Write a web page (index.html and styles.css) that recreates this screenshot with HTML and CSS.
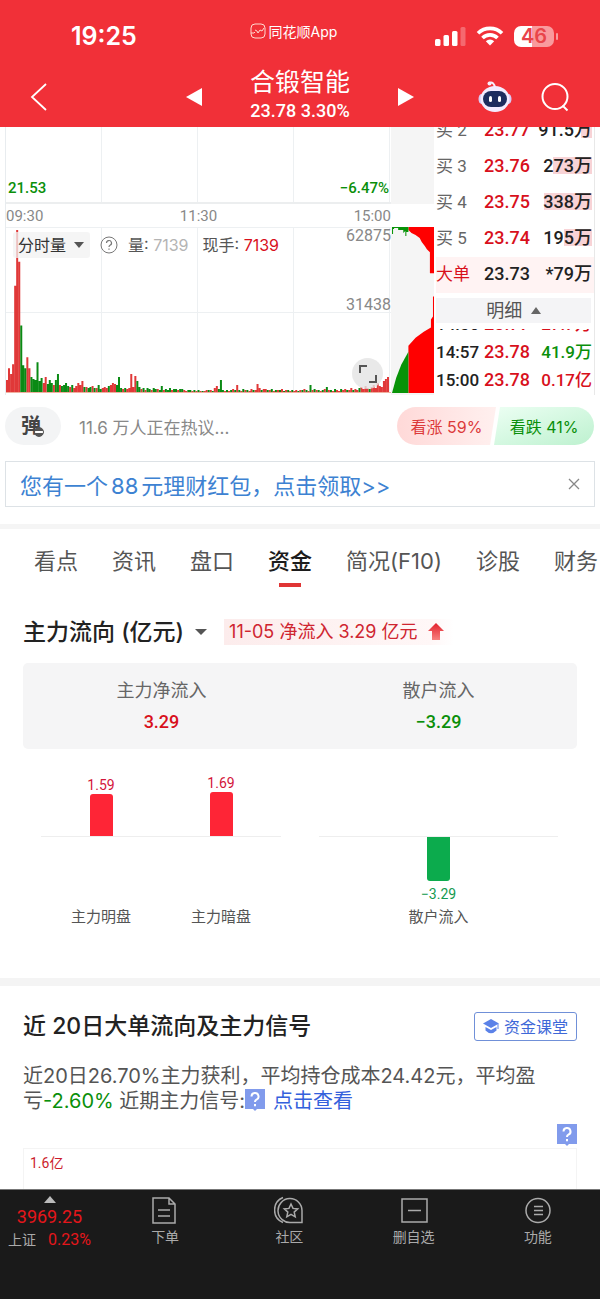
FILE: index.html
```html
<!DOCTYPE html>
<html lang="zh-CN">
<head>
<meta charset="utf-8">
<meta name="viewport" content="width=device-width, initial-scale=1">
<title>合锻智能</title>
<link rel="stylesheet" href="styles.css">
</head>
<body>
<header class="top">
  <div class="status">
    <time class="clock">19:25</time>
    <div class="app-name">
      <svg width="16" height="16" viewBox="0 0 16 16" fill="none" stroke="#ffd9d0" stroke-width="1"><rect x="1" y="1" width="14" height="14" rx="4"/><path d="M1 10h3l1-1M5 7l2 1 1 2 2-3 2 1 2-3"/></svg>
      <span>同花顺App</span>
    </div>
    <div class="signals">
      <svg width="31" height="20" viewBox="0 0 31 20" fill="#fff"><rect x="0" y="13" width="5.500" height="7" rx="1.500"/><rect x="8.500" y="9" width="5.500" height="11" rx="1.500"/><rect x="17" y="5" width="5.500" height="15" rx="1.500"/><rect x="25.500" y="1" width="5" height="19" rx="1.500" opacity=".28"/></svg>
      <svg width="28" height="20" viewBox="0 0 28 20" fill="none" stroke="#fff" stroke-width="3.600"><path d="M2 7.300a17 17 0 0 1 24 0"/><path d="M6.500 12a10.500 10.500 0 0 1 15 0"/><path d="M14 19.500l-4.200-4.300a6 6 0 0 1 8.400 0z" fill="#fff" stroke="none"/></svg>
      <div class="battery"><span>46</span></div>
    </div>
  </div>
  <div class="title-row">
    <button class="icon-btn back" aria-label="返回"><svg width="18" height="30" viewBox="0 0 18 30" fill="none" stroke="#fff" stroke-width="1.800"><path d="M16 2L2 15l14 13"/></svg></button>
    <div class="stock">
      <button class="icon-btn" aria-label="上一只"><svg width="16" height="18" viewBox="0 0 16 18" fill="#fff"><path d="M0 9L16 0v18z"/></svg></button>
      <div class="stock-name"><h1>合锻智能</h1><p>23.78 3.30%</p></div>
      <button class="icon-btn" aria-label="下一只"><svg width="16" height="18" viewBox="0 0 16 18" fill="#fff"><path d="M16 9L0 0v18z"/></svg></button>
    </div>
    <div class="tools">
      <button class="icon-btn" aria-label="智能助手"><svg width="34" height="32" viewBox="0 0 34 32"><path d="M11 2q5-2 6 5" fill="none" stroke="#f6eefb" stroke-width="2"/><circle cx="11.500" cy="2.500" r="2" fill="#f6eefb"/><ellipse cx="3.500" cy="18" rx="3" ry="5" fill="#d9cbf5"/><ellipse cx="30.500" cy="18" rx="3" ry="5" fill="#d9cbf5"/><ellipse cx="17" cy="18" rx="14.500" ry="13" fill="#f3ecff"/><rect x="5" y="10" width="24" height="16" rx="8" fill="#1d2c5e"/><rect x="11" y="15" width="3" height="6" rx="1.500" fill="#fff"/><rect x="20" y="15" width="3" height="6" rx="1.500" fill="#fff"/></svg></button>
      <button class="icon-btn" aria-label="搜索"><svg width="30" height="30" viewBox="0 0 30 30" fill="none" stroke="#fff" stroke-width="2"><circle cx="15" cy="14.500" r="12.500"/><path d="M22.500 23.500l5 5"/></svg></button>
    </div>
  </div>
</header>
<main>
  <section class="quote">
    <div class="chart">
      <div class="price-plot"><span>21.53</span><span>−6.47%</span></div>
      <div class="axis"><span>09:30</span><span>11:30</span><span>15:00</span></div>
      <div class="volume">
        <svg id="volume-bars" class="bars" viewBox="0 0 386 165" preserveAspectRatio="none"></svg>
        <div class="volume-head">
          <button class="indicator">分时量 <i class="caret"></i></button>
          <svg width="18" height="18" viewBox="0 0 18 18" fill="none" stroke="#777"><circle cx="9" cy="9" r="8"/><path d="M6.500 7a2.500 2.500 0 1 1 3.500 2.300q-1 .5-1 1.700M9 12.500v1.300" stroke-width="1.200"/></svg>
          <span>量: <b class="num-grey">7139</b></span>
          <span>现手: <b class="num-red">7139</b></span>
        </div>
        <span class="scale scale-top">62875</span>
        <span class="scale scale-mid">31438</span>
        <button class="expand" aria-label="全屏"><svg width="18" height="18" viewBox="0 0 18 18" fill="none" stroke="#555" stroke-width="2"><path d="M1 8V1h7M17 10v7h-7"/></svg></button>
      </div>
    </div>
    <div class="depth">
      <svg viewBox="0 0 42 165" preserveAspectRatio="none"><path d="M17 0H42V46H38V25L35 22 33 19 30 15 28 11 24 8 20 6 17 3z" fill="#f00"/><path d="M1 0H17V5H15V9H14V4L12 6V3H7V1H3V2H2V7H1z" fill="#089308"/><path d="M42 69V165H17V118L24 110 32 104 39 100V92l2-3V69z" fill="#f00"/><path d="M1 165L5 150 10 137 17 124V165z" fill="#089308"/></svg>
    </div>
    <div class="book">
      <div class="orders">
        <div class="order"><span>买 2</span><b>23.77</b><em><i style="width:11px"></i>91.5万</em></div>
        <div class="order"><span>买 3</span><b>23.76</b><em><i style="width:39px"></i>273万</em></div>
        <div class="order"><span>买 4</span><b>23.75</b><em><i style="width:48px"></i>338万</em></div>
        <div class="order"><span>买 5</span><b>23.74</b><em><i style="width:28px"></i>195万</em></div>
        <div class="order big"><span>大单</span><b>23.73</b><em>*79万</em></div>
      </div>
      <button class="detail">明细 <i class="caret up"></i></button>
      <div class="ticks">
        <div class="tick"><span>14:56</span><b>23.77</b><em class="red">27.7万</em></div>
        <div class="tick"><span>14:57</span><b>23.78</b><em class="green">41.9万</em></div>
        <div class="tick"><span>15:00</span><b>23.78</b><em class="red">0.17亿</em></div>
      </div>
    </div>
  </section>

  <section class="talk">
    <button class="danmu" aria-label="弹幕">弹<i></i></button>
    <p>11.6 万人正在热议...</p>
    <div class="vote"><button class="bull">看涨 59%</button><button class="bear">看跌 41%</button></div>
  </section>
  <div class="promo">
    <a href="#">您有一个<span>88</span>元理财红包，点击领取&gt;&gt;</a>
    <button class="icon-btn" aria-label="关闭"><svg width="12" height="12" viewBox="0 0 12 12" stroke="#888" stroke-width="1.300"><path d="M1 1l10 10M11 1L1 11"/></svg></button>
  </div>

  <nav class="tabs">
    <a href="#">看点</a><a href="#">资讯</a><a href="#">盘口</a><a href="#" class="on">资金</a><a href="#">简况(F10)</a><a href="#">诊股</a><a href="#">财务</a>
  </nav>

  <section class="flow">
    <div class="flow-head">
      <h2>主力流向 (亿元)</h2><i class="caret"></i>
      <span class="tag">11-05 净流入 3.29 亿元<svg width="16" height="18" viewBox="0 0 16 18"><defs><linearGradient id="up" x2="0" y2="1"><stop stop-color="#e3202c"/><stop offset="1" stop-color="#f7827f"/></linearGradient></defs><path d="M8 0l8 8h-4v9H4V8H0z" fill="url(#up)"/></svg></span>
    </div>
    <div class="summary">
      <div><span>主力净流入</span><b class="red">3.29</b></div>
      <div><span>散户流入</span><b class="green">−3.29</b></div>
    </div>
    <div class="bars-row">
      <div class="group main-force">
        <div class="col"><div class="pos"><b>1.59</b><i style="height:42px"></i></div><div class="neg"></div><span>主力明盘</span></div>
        <div class="col"><div class="pos"><b>1.69</b><i style="height:44px"></i></div><div class="neg"></div><span>主力暗盘</span></div>
      </div>
      <div class="group retail">
        <div class="col"><div class="pos"></div><div class="neg"><i style="height:44px"></i><b>−3.29</b></div><span>散户流入</span></div>
      </div>
    </div>
  </section>

  <section class="signal">
    <div class="signal-head">
      <h2>近 20日大单流向及主力信号</h2>
      <button class="course"><svg width="16" height="15" viewBox="0 0 16 15" fill="#5b82e8"><path d="M8 0l8 4.500L8 9 0 4.500z"/><path d="M2.500 8L8 11l5.500-3v3.500Q8 17 2.500 11.500z"/><path d="M15 5v5" stroke="#5b82e8"/></svg>资金课堂</button>
    </div>
    <p class="note">近20日26.70%主力获利，平均持仓成本24.42元，平均盈亏<b>-2.60%</b> 近期主力信号:<svg class="help" width="20" height="22" viewBox="0 0 20 22"><path d="M0 0h20v20h-8l-2 2-2-2H0z" fill="#819bec"/><path d="M6.500 7.500a3.500 3.500 0 1 1 5 3.200Q10 11.500 10 13M10 15v2.300" fill="none" stroke="#fff" stroke-width="2"/></svg><a href="#">点击查看</a></p>
    <div class="help-row"><button class="icon-btn" aria-label="说明"><svg width="20" height="22" viewBox="0 0 20 22"><path d="M0 0h20v20h-8l-2 2-2-2H0z" fill="#819bec"/><path d="M6.500 7.500a3.500 3.500 0 1 1 5 3.200Q10 11.500 10 13M10 15v2.300" fill="none" stroke="#fff" stroke-width="2"/></svg></button></div>
    <div class="trend">1.6亿</div>
  </section>
</main>
<footer class="dock">
  <a href="#" class="index"><i class="caret up"></i><b>3969.25</b><span>上证 <em>0.23%</em></span></a>
  <a href="#" class="dock-item"><svg width="28" height="28" viewBox="0 0 28 28"><path d="M2 2h16l6 6v19H2zM18 2v6h6M7 14h12M7 20h12"/></svg>下单</a>
  <a href="#" class="dock-item"><svg width="30" height="28" viewBox="0 0 30 28"><path d="M17 26.500a12 12 0 1 1 11-12v12zM9 1.500a13.500 13.500 0 0 0 0 25"/><path d="M17 8l2 4.400 4.700.5-3.500 3.200 1 4.700L17 18.400l-4.200 2.400 1-4.700-3.500-3.200 4.700-.5z"/></svg>社区</a>
  <a href="#" class="dock-item"><svg width="28" height="28" viewBox="0 0 28 28"><path d="M2 3h25v23H2zM8 14.500h13"/></svg>删自选</a>
  <a href="#" class="dock-item"><svg width="28" height="28" viewBox="0 0 28 28"><circle cx="14" cy="14.500" r="12"/><path d="M10 10.500h9M10 14.500h9M10 18.500h9"/></svg>功能</a>
</footer>
<script src="chart.js"></script>
</body>
</html>
```
FILE: styles.css
```css
* { box-sizing: border-box; }
body {
  margin: 0;
  background: #fff;
  color: #222;
  font-family: Inter, "Noto Sans CJK SC", sans-serif;
  font-size: 16px;
}
h1, h2, p { margin: 0; }
button { border: 0; margin: 0; padding: 0; background: none; font: inherit; color: inherit; }
a { color: inherit; text-decoration: none; }
i, em { font-style: normal; }
svg { display: block; }
.red { color: #d8101c; }
.green { color: #0a8f0a; }
.icon-btn { display: flex; align-items: center; justify-content: center; }
.caret {
  display: inline-block;
  border: 5px solid transparent;
  border-top: 6px solid #555;
  border-bottom: 0;
}
.caret.up { border-top: 0; border-bottom: 7px solid #666; }

/* header */
.top { background: #f13038; color: #fff; }
.status, .title-row { display: grid; grid-template-columns: 1fr auto 1fr; align-items: center; }
.status { height: 66px; padding: 6px 46px 0 71px; }
.clock { font-size: 25px; font-weight: 600; }
.app-name { display: flex; align-items: center; gap: 3px; margin-right: 38px; padding-bottom: 10px; font-size: 14px; }
.signals { display: flex; align-items: center; justify-content: flex-end; gap: 10px; }
.battery {
  position: relative;
  width: 40px;
  height: 21px;
  border-radius: 7px;
  background: linear-gradient(90deg, #fff 45%, #f99a9d 45%);
  color: #e9444a;
  font-size: 20px;
  font-weight: 600;
  line-height: 21px;
  text-align: center;
}
.battery::after {
  content: "";
  position: absolute;
  right: -4px;
  top: 7px;
  width: 2px;
  height: 7px;
  border-radius: 2px;
  background: #f99a9d;
}
.title-row { height: 61px; padding: 0 30px; }
.back { justify-self: start; }
.stock { display: flex; align-items: center; gap: 48px; }
.stock-name { padding-bottom: 3px; text-align: center; }
.stock h1 { font-size: 25px; font-weight: 400; line-height: 32px; }
.stock p { font: 500 18px/26px Roboto, sans-serif; }
.tools { display: flex; justify-content: flex-end; align-items: center; gap: 28px; }

/* quote */
.quote { display: flex; height: 268px; padding: 0 5px; font-family: Roboto, "Noto Sans CJK SC", sans-serif; }
.chart { flex: 1; border-left: 1px solid #e8ecef; }
.price-plot {
  display: flex;
  align-items: flex-end;
  justify-content: space-between;
  height: 77px;
  padding: 0 2px 5px;
  border-bottom: 2px solid #eceeef;
  color: #0a8f0a;
  font-size: 15px;
  font-weight: 500;
  background: repeating-linear-gradient(90deg, transparent 0 95px, #edf0f2 95px 96px);
}
.axis { display: flex; justify-content: space-between; height: 23px; align-items: center; color: #888; font-size: 15px; }
.volume {
  position: relative;
  height: 166px;
  border-top: 1px solid #edf0f2;
  border-bottom: 1px solid #f0b0a0;
  background:
    linear-gradient(#edf0f2, #edf0f2) 0 84px / 100% 1px no-repeat,
    repeating-linear-gradient(90deg, transparent 0 95px, #edf0f2 95px 96px);
}
.bars { position: absolute; left: 0; top: 0; width: 100%; height: 100%; }
.volume-head {
  position: relative;
  display: flex;
  align-items: center;
  gap: 10px;
  padding: 4px 0 0 7px;
  color: #555;
  font: 16px/26px Inter, "Noto Sans CJK SC", sans-serif;
}
.indicator {
  display: flex;
  align-items: center;
  gap: 8px;
  height: 26px;
  padding: 0 6px 0 5px;
  background: rgba(242, 242, 242, .75);
  border-radius: 3px;
  color: #333;
}
.volume-head b { font-weight: 400; }
.volume-head span + span { margin-left: 4px; }
.num-grey { color: #b4b4b4; }
.num-red { color: #d8101c; }
.scale { position: absolute; right: 0; color: #888; font-size: 16px; line-height: 16px; }
.scale-top { top: 0; }
.scale-mid { top: 69px; }
.expand {
  position: absolute;
  right: 8px;
  bottom: 3px;
  display: grid;
  place-items: center;
  width: 31px;
  height: 31px;
  border-radius: 50%;
  background: rgba(228, 228, 228, .8);
}
.depth {
  width: 43px;
  display: flex;
  flex-direction: column;
  justify-content: flex-end;
  padding-bottom: 2px;
  background: linear-gradient(#f5f5f5 0 77px, #fff 77px 100px, #f5f5f5 100px);
}
.depth svg { width: 100%; height: 166px; }
.book { width: 161px; display: flex; flex-direction: column; padding-left: 2px; border-right: 1px solid #e8e8e8; }
.orders, .ticks { display: flex; flex-direction: column; justify-content: flex-end; overflow: hidden; }
.orders { height: 166px; }
.order, .tick { flex: none; display: grid; grid-template-columns: 48px 48px 1fr; align-items: baseline; font-size: 18px; font-weight: 500; }
.order { height: 36px; line-height: 33px; }
.order span { color: #666; font-weight: 400; font-size: 17px; }
.order b, .tick b { color: #d8101c; font-weight: 500; }
.order em, .tick em { position: relative; justify-self: end; z-index: 0; margin-right: 2px; white-space: nowrap; }
.order em i { position: absolute; right: 0; top: 8px; bottom: 8px; z-index: -1; background: #f8d3d6; }
.order.big { background: #fff3f3; }
.order.big span { color: #d8101c; }
.order.big b { color: #222; }
.detail { height: 25px; margin: 5px 3px 6px 0; background: #f4f4f6; color: #555; font-size: 18px; line-height: 25px; }
.detail .caret { margin-left: 4px; vertical-align: 3px; }
.ticks { height: 66px; }
.tick { height: 28px; font-size: 17px; line-height: 26px; }
.tick b { font-size: 18px; }

/* discussion */
.talk { display: flex; align-items: center; gap: 18px; padding: 12px 6px 16px 5px; color: #888; font-size: 17px; }
.talk p { flex: 1; }
.danmu { position: relative; width: 56px; height: 38px; border-radius: 19px; background: #f3f4f5; color: #444; font-size: 20px; font-weight: 700; line-height: 34px; padding-right: 4px; }
.danmu i {
  position: absolute;
  right: 17px;
  bottom: 8px;
  width: 10px;
  height: 10px;
  border-radius: 50%;
  background: linear-gradient(#555 3px, #fff 3px 5px, #555 5px);
  border: 1px solid #555;
}
.vote { display: flex; font-size: 16px; }
.vote button { height: 38px; }
.bull { width: 99px; border-radius: 19px 0 0 19px; color: #dc3a3a; background: linear-gradient(90deg, #ffd9d8, #fff0ef); clip-path: polygon(0 0, 100% 0, 94% 100%, 0 100%); }
.bear { width: 100px; margin-left: -2px; border-radius: 0 19px 19px 0; color: #0a8f0a; background: linear-gradient(160deg, #ecfff3, #bdf1cf); clip-path: polygon(6% 0, 100% 0, 100% 100%, 0 100%); }
.promo { display: flex; align-items: center; justify-content: space-between; margin: 0 5px; padding: 0 14px; height: 46px; border: 1px solid #dde2e6; color: #3d82d2; font-size: 22px; }
.promo span { margin: 0 3px; }

/* tabs */
.tabs { display: flex; gap: 34px; margin-top: 17px; padding: 14px 0 0 34px; border-top: 5px solid #f5f5f5; overflow: hidden; color: #555; font-size: 22px; line-height: 36px; }
.tabs a { flex: none; padding-bottom: 8px; }
.tabs .on { color: #1c1c1c; font-weight: 500; background: linear-gradient(#e03535, #e03535) center bottom / 22px 4px no-repeat; }

/* capital flow */
.flow { padding: 30px 23px 50px; border-bottom: 8px solid #f4f4f4; }
.flow-head { display: flex; align-items: center; margin-bottom: 16px; }
h2 { font-size: 23px; font-weight: 500; line-height: 30px; }
.flow-head .caret { margin: 0 17px 0 11px; border-width: 6px; border-bottom-width: 0; }
.tag { display: flex; align-items: center; gap: 10px; height: 26px; padding: 0 10px 0 5px; background: linear-gradient(90deg, #fcecec, #fff7f7 90%, #fff); color: #cf2530; font-size: 18px; line-height: 24px; white-space: nowrap; }
.summary { display: grid; grid-template-columns: 1fr 1fr; padding: 13px 0 12px; background: #f5f5f6; border-radius: 5px; text-align: center; }
.summary div { display: flex; flex-direction: column; }
.summary span { color: #666; font-size: 18px; line-height: 30px; }
.summary b { font: 500 18px/31px Roboto, sans-serif; }
.bars-row { display: grid; grid-template-columns: 1fr 1fr; padding-top: 22px; }
.group { display: grid; }
.main-force { grid-template-columns: 1fr 1fr; padding: 0 19px 0 18px; }
.col { display: flex; flex-direction: column; align-items: center; }
.col i { width: 23px; }
.col b { font: 14px/18px Roboto, sans-serif; }
.pos, .neg { display: flex; flex-direction: column; align-items: center; width: 100%; }
.pos { height: 66px; justify-content: flex-end; border-bottom: 1px solid #eee; color: #d3143a; }
.pos i { background: #fe2536; border-radius: 3px 3px 0 0; }
.neg { height: 69px; color: #149a50; }
.neg i { background: #0cab4d; border-radius: 0 0 3px 3px; margin-bottom: 4px; }
.col span { color: #555; font-size: 15px; line-height: 22px; }
.retail { padding: 0 19px; }

/* signals */
.signal { padding: 25px 23px 0; }
.signal-head { display: flex; justify-content: space-between; align-items: center; margin-bottom: 23px; }
.course { display: flex; align-items: center; gap: 5px; height: 29px; padding: 0 8px; border: 1px solid #7090d8; border-radius: 3px; color: #3e68d8; font-size: 16px; }
.note { padding-right: 12px; color: #555; font-size: 20px; line-height: 25px; }
.note b { font-weight: 400; color: #0a8f0a; }
.note .help { display: inline-block; vertical-align: -3px; margin: -4px 8px 0 0; }
.note a { color: #3460dc; }
.help-row { display: flex; justify-content: flex-end; padding-top: 10px; }
.trend { height: 41px; margin-top: 2px; padding: 4px 6px; border: 1px solid #f4f4f4; border-bottom: 0; color: #cc1d2c; font: 14px/20px Roboto, "Noto Sans CJK SC", sans-serif; }

/* dock */
.dock { display: grid; grid-template-columns: 103px repeat(4, 1fr); height: 110px; padding-top: 6px; background: #1a1a1a; border-top: 1px solid #777; color: #aaa; font-size: 14px; line-height: 20px; }
.index { display: flex; flex-direction: column; align-items: center; padding-right: 4px; }
.index .caret { border-width: 0 6px 7px; border-bottom-color: #bbb; }
.index b { color: #e5161b; font: 18px/28px Roboto, sans-serif; }
.index span { font-size: 14px; line-height: 18px; }
.index em { margin-left: 8px; color: #e5161b; font: 16px/18px Roboto, sans-serif; }
.dock-item { display: flex; flex-direction: column; align-items: center; gap: 3px; }
.dock-item svg { fill: none; stroke: #aaa; stroke-width: 1.5; }
```
FILE: chart.js
```js
// Volume per slot: positive is a rising slot (red), negative a falling one (green).
const volumes = [
  12, 24, 18, 28, 107, 163, 131, -67, -27, -24, 35, 24, -15, -13, -12, -30, -11, -14, 9,
  15, -8, -12, -9, 7, -12, -18, 7, -6, -7, -9, -6, 5, -7, 4, 6, 9, 7, 11, -5,
  5, -4, -5, 6, -4, 4, -7, -3, 4, 5, 4, -6, 7, 9, 8, -7, -15, -4, 3, -4,
  3, 4, 18, 5, 16, -11, -5, 3, -4, 2, -4, -3, 2, -4, -3, 3, -2, -6, 2, -3,
  -2, -4, 2, -3, -3, 2, -3, -3, 2, 1, -2, -2, 1, -2, 1, -2, 1, -1, 1, 2,
  -2, 2, -1, 4, 6, -3, -12, -2, 1, -2, 1, -2, 3, -2, 7, -2, 1, -3, 2, -2,
  1, 3, -2, 2, 8, 4, -2, 3, 3, -2, 2, -3, 1, -2, 2, -2, 3, -1, 2, -2,
  1, -2, 1, 2, -1, 2, -2, 3, -2, 1, -7, 2, -3, 2, -2, 1, -2, 3, -5, 2,
  -2, 1, -3, 2, 1, -3, 2, 3, -2, 2, 4, -2, 3, 2, -4, 5, 3, 6, 4, -3,
  5, 7, 4, 9, 6, 5, 11, 13, 15
];
const slot = 384 / volumes.length;
const path = (colour, keep) => {
  const d = volumes.map((v, i) => keep(v) ? `M${(i * slot + 1).toFixed(1)} 165v${-Math.abs(v)}` : "").join("");
  return `<path d="${d}" stroke="${colour}" stroke-width="2"/>`;
};
document.getElementById("volume-bars").innerHTML =
  path("#e03838", v => v > 0) + path("#0a8a14", v => v < 0);
```
